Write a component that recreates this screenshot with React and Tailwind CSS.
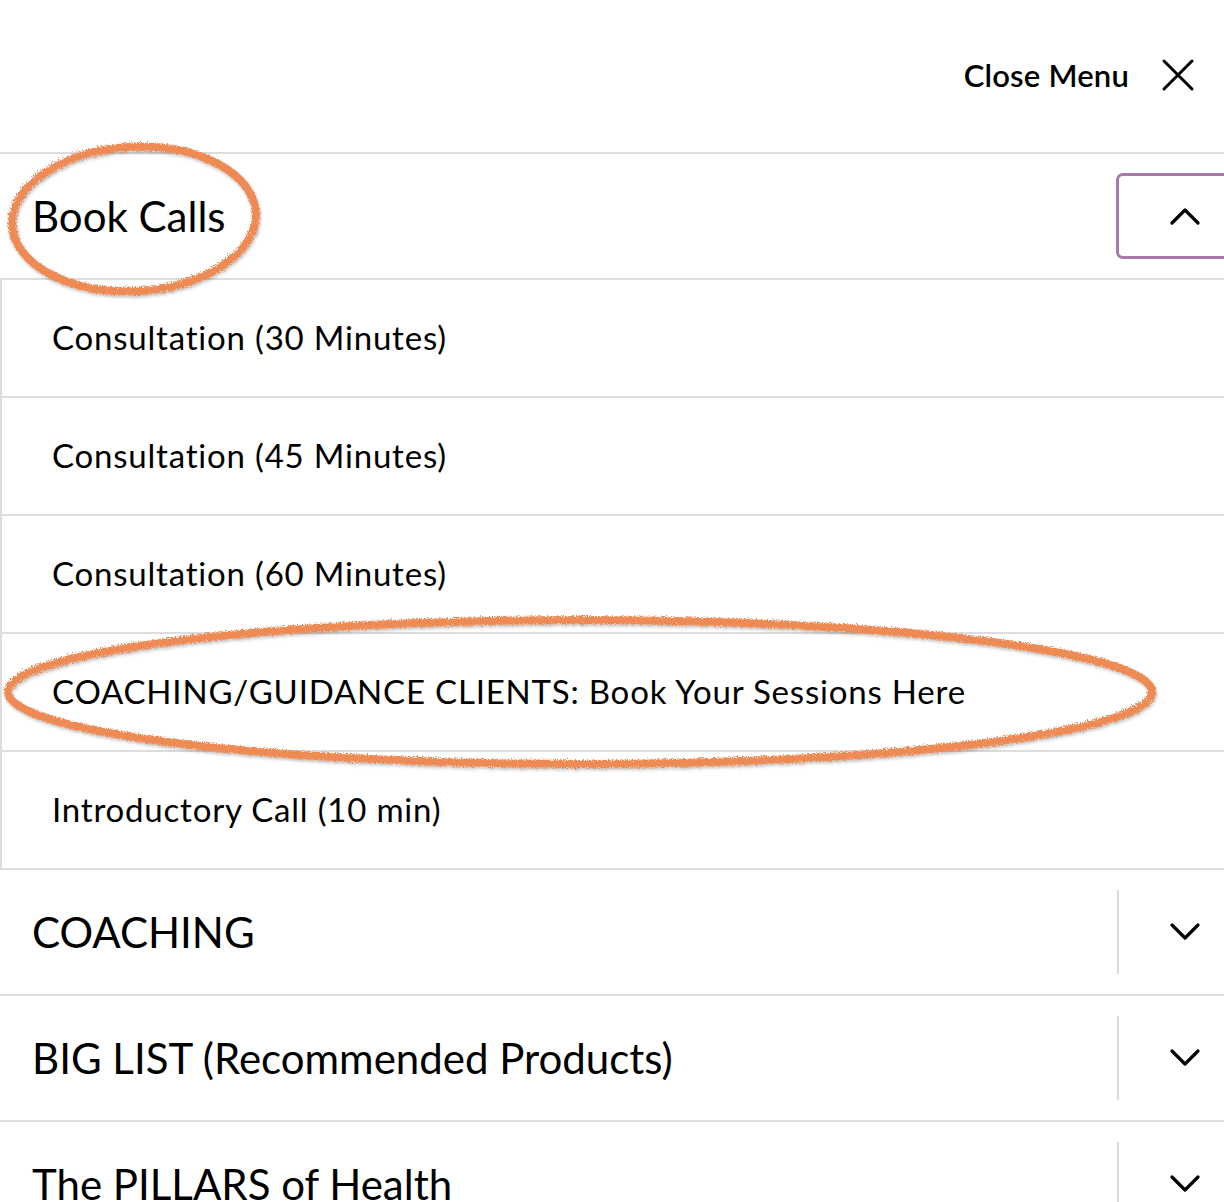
import React from "react";

const subItems = [
  "Consultation (30 Minutes)",
  "Consultation (45 Minutes)",
  "Consultation (60 Minutes)",
  "COACHING/GUIDANCE CLIENTS: Book Your Sessions Here",
  "Introductory Call (10 min)",
];

const closedItems = ["COACHING", "BIG LIST (Recommended Products)", "The PILLARS of Health"];

const Chevron = ({ up = false }) => (
  <svg width="32" height="20" viewBox="0 0 32 20" fill="none">
    <path
      d={up ? "M3 17 L16 4 L29 17" : "M3 3 L16 16 L29 3"}
      stroke="#000"
      strokeWidth="3.2"
      strokeLinecap="round"
      strokeLinejoin="round"
    />
  </svg>
);

// hand-drawn marker circles laid over the menu
const Scribbles = () => (
  <svg
    className="absolute inset-0 pointer-events-none"
    width="1224"
    height="1202"
    viewBox="0 0 1224 1202"
  >
    <defs>
      <filter id="rough" x="-10%" y="-30%" width="120%" height="160%">
        <feTurbulence type="fractalNoise" baseFrequency="0.8" numOctaves="3" seed="5" result="noise" />
        <feDisplacementMap in="SourceGraphic" in2="noise" scale="6" result="disp" />
        <feDropShadow dx="1" dy="2" stdDeviation="1.5" floodColor="#000" floodOpacity="0.25" />
      </filter>
    </defs>
    <g filter="url(#rough)" stroke="#ee8a52" strokeWidth="8" fill="none">
      <ellipse cx="134" cy="219" rx="122" ry="72" transform="rotate(-3 134 219)" />
      <ellipse cx="580" cy="692" rx="572" ry="72" />
    </g>
  </svg>
);

export default function App() {
  return (
    <div className="relative w-[1224px] h-[1202px] overflow-hidden bg-white text-black font-['Lato',sans-serif] [font-variant-ligatures:none]">
      <header className="h-[152px] flex items-center justify-end pr-[29px] gap-[32px] pb-[2px]">
        <span className="text-[31px] font-semibold tracking-[0.2px]">Close Menu</span>
        <svg width="34" height="34" viewBox="0 0 34 34" fill="none">
          <path d="M3 3 L31 31 M31 3 L3 31" stroke="#000" strokeWidth="3" strokeLinecap="round" />
        </svg>
      </header>

      <nav className="border-t-2 border-[#dddddd]">
        <div className="h-[126px] flex items-center justify-between border-b-2 border-[#dddddd]">
          <span className="pl-[32px] text-[42px] leading-none">Book Calls</span>
          <button className="mr-[-14px] w-[122px] h-[86px] border-[3px] border-[#a77aa9] rounded-[7px] flex items-center pl-[50px]">
            <Chevron up />
          </button>
        </div>

        <ul className="border-l-2 border-[#dddddd]">
          {subItems.map((item) => (
            <li
              key={item}
              className="h-[118px] flex items-center pl-[50px] border-b-2 border-[#dddddd] text-[33px] tracking-[0.8px]"
            >
              {item}
            </li>
          ))}
        </ul>

        {closedItems.map((item) => (
          <div
            key={item}
            className="h-[126px] flex items-center justify-between border-b-2 border-[#dddddd]"
          >
            <span className="pl-[32px] text-[42px] leading-none">{item}</span>
            <div className="h-[84px] border-l-2 border-[#dddddd] w-[107px] flex items-center pl-[50px]">
              <Chevron />
            </div>
          </div>
        ))}
      </nav>

      <Scribbles />
    </div>
  );
}
